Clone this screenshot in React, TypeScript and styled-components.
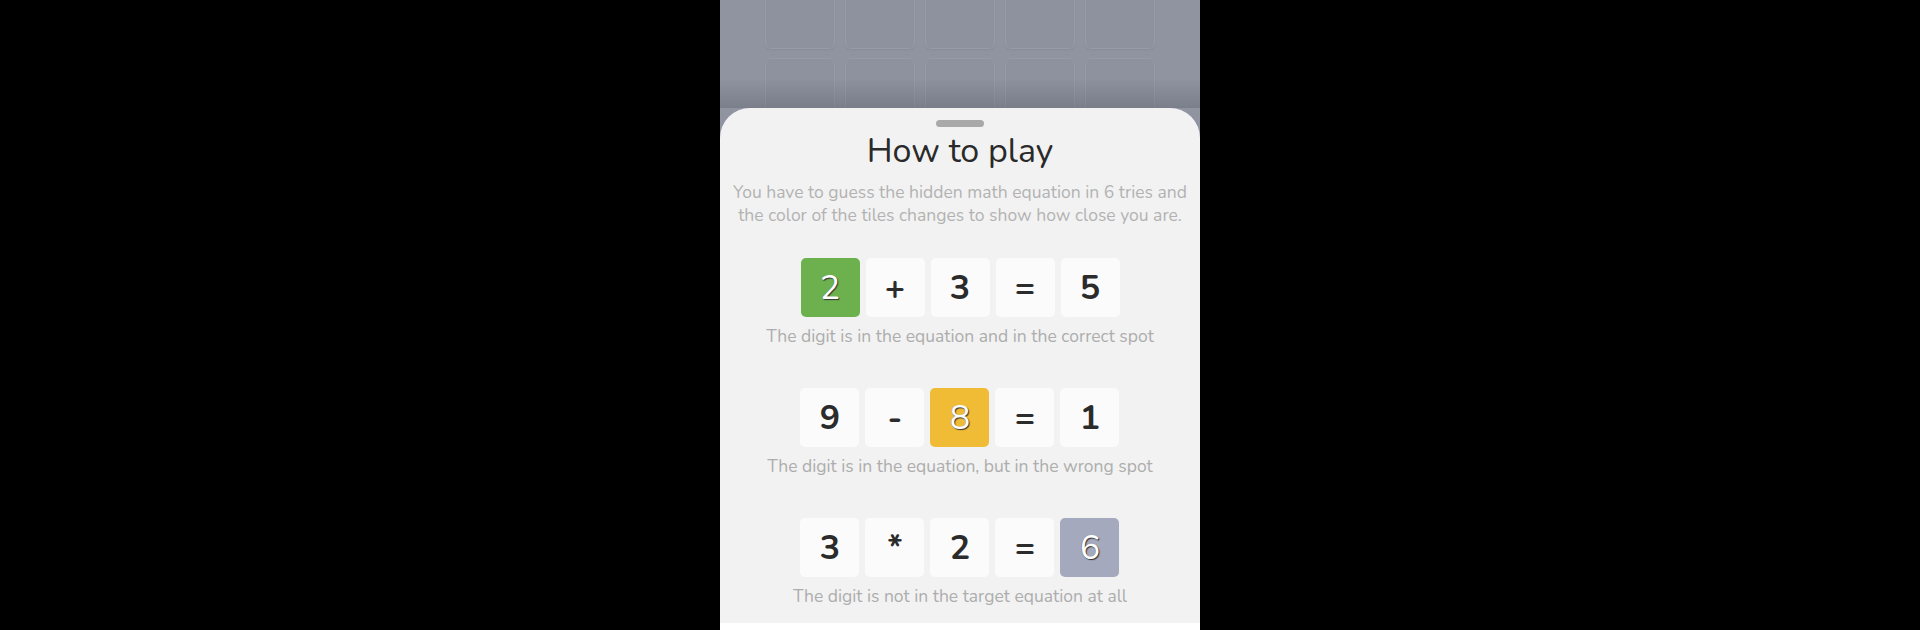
import React from "react";
import styled, { createGlobalStyle } from "styled-components";

type Kind = "plain" | "correct" | "present" | "absent";

interface IExample {
  cells: { ch: string; kind?: Kind }[];
  caption: string;
}

const examples: IExample[] = [
  {
    cells: [{ ch: "2", kind: "correct" }, { ch: "+" }, { ch: "3" }, { ch: "=" }, { ch: "5" }],
    caption: "The digit is in the equation and in the correct spot",
  },
  {
    cells: [{ ch: "9" }, { ch: "-" }, { ch: "8", kind: "present" }, { ch: "=" }, { ch: "1" }],
    caption: "The digit is in the equation, but in the wrong spot",
  },
  {
    cells: [{ ch: "3" }, { ch: "*" }, { ch: "2" }, { ch: "=" }, { ch: "6", kind: "absent" }],
    caption: "The digit is not in the target equation at all",
  },
];

const tileColors: Record<Kind, string> = {
  plain: "#fbfbfc",
  correct: "#6cb14e",
  present: "#f1bc35",
  absent: "#a4a9bd",
};

export default function App() {
  return (
    <>
      <GlobalStyle />
      <Screen>
        <Phone>
          <Board>
            {Array.from({ length: 10 }).map((_, i) => (
              <BoardTile key={i} />
            ))}
          </Board>
          <Sheet>
            <Handle />
            <Title>How to play</Title>
            <Intro>
              You have to guess the hidden math equation in 6 tries and the color of the tiles
              changes to show how close you are.
            </Intro>
            {examples.map((ex, i) => (
              <Example key={i}>
                <TileRow>
                  {ex.cells.map((c, j) => (
                    <Tile key={j} kind={c.kind || "plain"}>
                      {c.ch}
                    </Tile>
                  ))}
                </TileRow>
                <Caption>{ex.caption}</Caption>
              </Example>
            ))}
          </Sheet>
          <BottomStrip />
        </Phone>
      </Screen>
    </>
  );
}

const GlobalStyle = createGlobalStyle`
  html, body {
    margin: 0;
    padding: 0;
    background: #000;
  }
  body {
    font-family: "Nunito", Lato, "Noto Sans", sans-serif;
  }
`;

const Screen = styled.div`
  display: flex;
  justify-content: center;
  height: 630px;
  overflow: hidden;
  background: #000;
`;

const Phone = styled.div`
  width: 480px;
  display: flex;
  flex-direction: column;
  background: #8f94a0;
`;

const Board = styled.div`
  position: relative;
  flex-shrink: 0;
  height: 108px;
  overflow: hidden;
  display: grid;
  grid-template-columns: repeat(5, 70px);
  grid-template-rows: 70px 70px;
  gap: 9px 10px;
  justify-content: center;
  align-content: start;
  &::after {
    content: "";
    position: absolute;
    left: 0;
    right: 0;
    bottom: 0;
    height: 30px;
    background: linear-gradient(rgba(40, 42, 52, 0), rgba(40, 42, 52, 0.2));
  }
  & > div {
    transform: translateY(-21px);
  }
`;

const BoardTile = styled.div`
  border-radius: 6px;
  background: #8d929e;
  border: 1px solid #969ba6;
  box-shadow: 0 1px 2px rgba(0, 0, 0, 0.06);
  box-sizing: border-box;
`;

const Sheet = styled.div`
  flex: 1;
  min-height: 0;
  overflow: hidden;
  background: #f2f2f2;
  border-radius: 30px 30px 0 0;
  box-sizing: border-box;
  padding: 12px 8px 0;
  display: flex;
  flex-direction: column;
  align-items: center;
  & > * {
    flex-shrink: 0;
  }
`;

const Handle = styled.div`
  width: 48px;
  height: 7px;
  border-radius: 4px;
  background: #a9a9a9;
`;

const Title = styled.h1`
  margin: 2px 0 0;
  font-size: 34px;
  line-height: 44px;
  font-weight: 400;
  color: #2a2a2a;
`;

const Intro = styled.p`
  margin: 8px 0 0;
  font-size: 17.5px;
  line-height: 23px;
  color: #b2b2b2;
  text-align: center;
`;

const Example = styled.div`
  display: flex;
  flex-direction: column;
  align-items: center;
  margin-top: 31px;
  & + & {
    margin-top: 40px;
  }
`;

const TileRow = styled.div`
  display: flex;
  gap: 6px;
`;

const Tile = styled.div<{ kind: Kind }>`
  width: 59px;
  height: 59px;
  border-radius: 5px;
  display: flex;
  align-items: center;
  justify-content: center;
  background: ${(p) => tileColors[p.kind]};
  font-size: 34px;
  font-weight: ${(p) => (p.kind === "plain" ? 700 : 400)};
  color: ${(p) => (p.kind === "plain" ? "#2b2b2b" : "#fff")};
  text-shadow: ${(p) =>
    p.kind === "plain" ? "none" : "1px 1px 1px #333, -0.5px -0.5px 0 rgba(0,0,0,0.3)"};
`;

const Caption = styled.div`
  margin-top: 8px;
  font-size: 17.5px;
  line-height: 23px;
  color: #adadad;
`;

const BottomStrip = styled.div`
  flex-shrink: 0;
  height: 7px;
  background: #fff;
`;
